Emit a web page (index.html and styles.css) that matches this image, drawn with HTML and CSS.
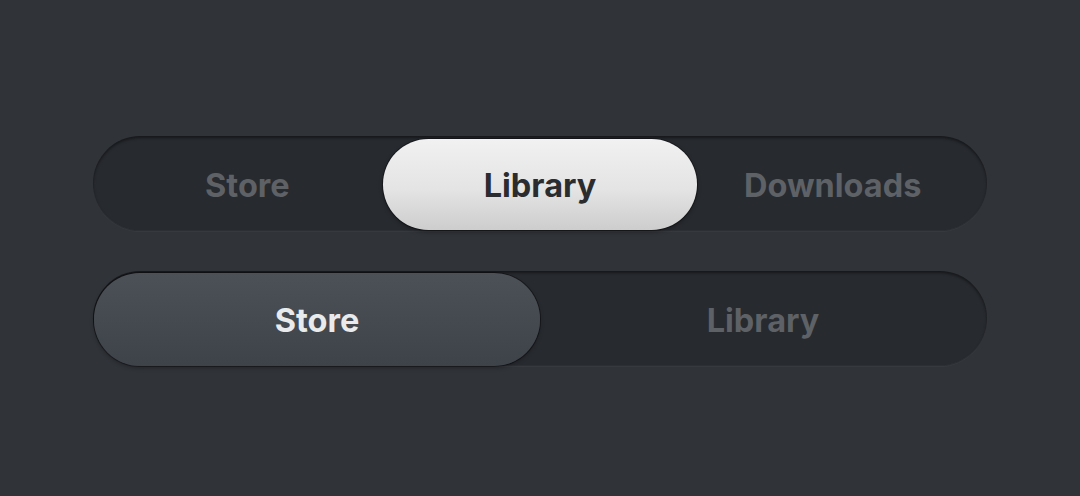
FILE: index.html
```html
<!DOCTYPE html>
<html lang="en">
<head>
    <meta charset="UTF-8">
    <meta name="viewport" content="width=device-width, initial-scale=1.0">
    <title>Segmented Controls</title>
    <link rel="stylesheet" href="styles.css">
</head>
<body>
    <div class="controls">
        <!-- Three segment control, light pill -->
        <div class="segmented three">
            <div class="segment">Store</div>
            <div class="segment active light">Library</div>
            <div class="segment">Downloads</div>
        </div>

        <!-- Two segment control, dark pill -->
        <div class="segmented two">
            <div class="segment active dark">Store</div>
            <div class="segment">Library</div>
        </div>
    </div>
</body>
</html>
```

FILE: styles.css
```css
* {
    margin: 0;
    padding: 0;
    box-sizing: border-box;
}

body {
    background-color: #303338;
    font-family: Inter, 'Liberation Sans', Arial, sans-serif;
    height: 100vh;
    overflow: hidden;
}

.controls {
    display: flex;
    flex-direction: column;
    gap: 40px;
    padding: 136px 93px 0;
}

/* Track */
.segmented {
    display: grid;
    height: 95px;
    border-radius: 48px;
    background-color: #272a2f;
    box-shadow: inset 0 2px 3px rgba(0, 0, 0, 0.45), inset 0 -1px 0 rgba(255, 255, 255, 0.03), 0 1px 0 rgba(255, 255, 255, 0.03);
}

.segmented.three {
    grid-template-columns: repeat(3, 1fr);
    padding: 3px 8px 1px;
}

.segmented.two {
    grid-template-columns: repeat(2, 1fr);
    padding: 2px 1px 0;
}

.segment {
    display: flex;
    align-items: center;
    justify-content: center;
    padding-top: 2px;
    font-size: 32.5px;
    font-weight: 700;
    color: #5e6166;
    border-radius: 46px;
}

/* Active pills */
.segment.light {
    margin: 0 -11px;
    color: #2a2c30;
    background: linear-gradient(to bottom, #f1f1f1, #e4e4e4 55%, #cdcdcd);
    box-shadow: 0 0 0 1px rgba(0, 0, 0, 0.35), 0 2px 4px rgba(0, 0, 0, 0.35);
}

.segment.dark {
    color: #e9eaec;
    background: linear-gradient(to bottom, #4c5158, #3e4249);
    box-shadow: 0 0 0 1px rgba(0, 0, 0, 0.4), 0 2px 4px rgba(0, 0, 0, 0.3);
}
```
